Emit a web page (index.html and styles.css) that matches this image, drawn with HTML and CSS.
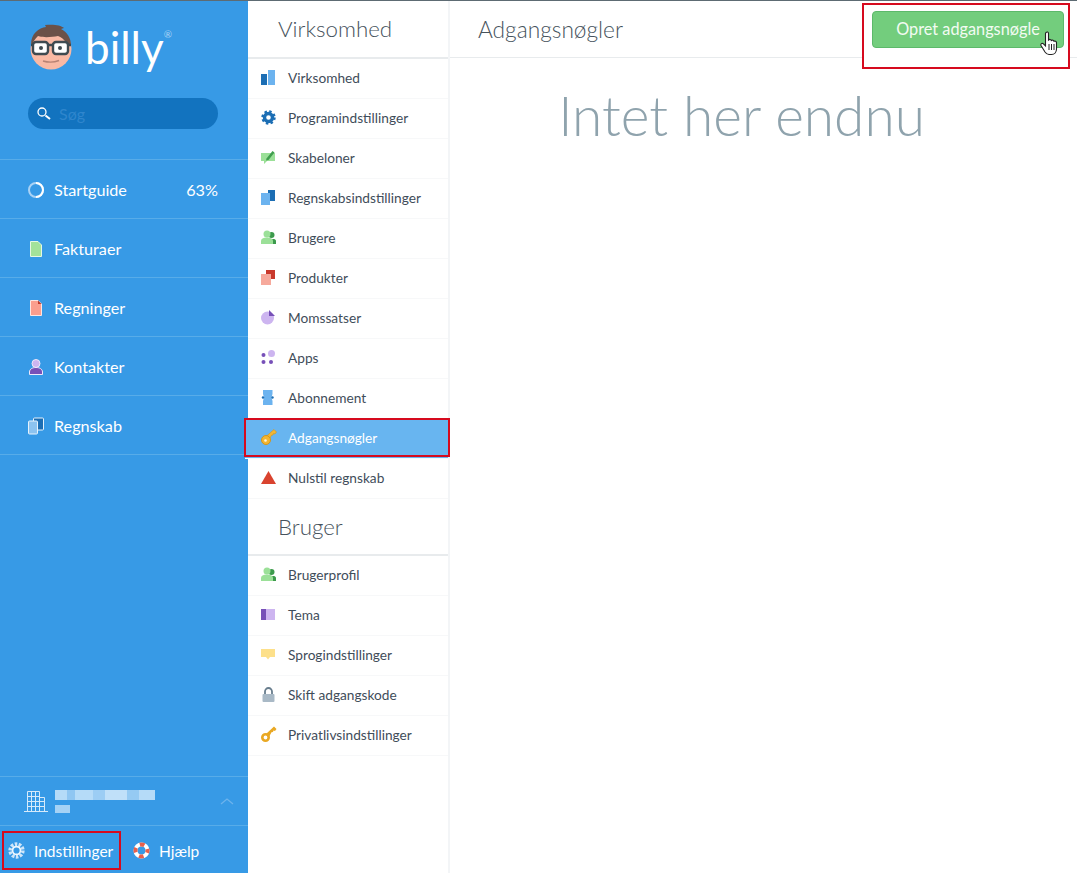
FILE: index.html
```html
<!DOCTYPE html>
<html lang="da">
<head>
<meta charset="utf-8">
<title>Adgangsnøgler</title>
<link rel="stylesheet" href="styles.css">
</head>
<body>
<div class="app">
  <aside class="side">
    <div class="brand">
      <svg class="face" width="44" height="46" viewBox="0 0 44 46">
        <circle cx="22" cy="25" r="20.5" fill="#f9b9a4"/>
        <path d="M2 21C2 9 10 4 17 3l-1-2c8-1 16 0 19 3l-3 1c6 3 10 9 10 16l-4-1c-3-5-6-7-9-8-6 1-14 2-20 0-3 3-5 6-6 9z" fill="#6b5148"/>
        <rect x="4" y="18" width="15" height="12" rx="3" fill="#fff" stroke="#3f4a50" stroke-width="2.4"/>
        <rect x="24" y="18" width="15" height="12" rx="3" fill="#fff" stroke="#3f4a50" stroke-width="2.4"/>
        <path d="M19 21h5M2 21h2M39 21h3" stroke="#3f4a50" stroke-width="2.4"/>
        <circle cx="12" cy="24" r="2" fill="#3f4a50"/><circle cx="31" cy="24" r="2" fill="#3f4a50"/>
        <path d="M14 37c5 1.500 11 1.500 16-.5" fill="none" stroke="#b98273" stroke-width="1.400"/>
      </svg>
      <span class="word">billy</span><span class="reg">®</span>
    </div>
    <div class="search">
      <svg width="16" height="16" viewBox="0 0 16 16"><circle cx="6" cy="6" r="4" fill="none" stroke="#fff" stroke-width="1.300"/><path d="M9.500 9.500l4.500 3.500" stroke="#fff" stroke-width="2"/></svg>
      <span class="search-ph">Søg</span>
    </div>
    <nav class="mainnav">
      <a class="mainitem">
        <svg class="mi" width="18" height="18" viewBox="0 0 18 18"><circle cx="9" cy="9" r="7" fill="none" stroke="#a9d2f5" stroke-width="2"/><path d="M9 2A7 7 0 0 1 9 16" fill="none" stroke="#fff" stroke-width="2"/></svg>
        <span class="grow">Startguide</span><span>63%</span>
      </a>
      <a class="mainitem">
        <svg class="mi" width="18" height="18" viewBox="0 0 18 18"><path d="M3.500 1.500h7.500l3.500 3.500v11.500h-11z" fill="#a3e29a" stroke="#e6f7e3"/></svg>
        <span class="grow">Fakturaer</span>
      </a>
      <a class="mainitem">
        <svg class="mi" width="18" height="18" viewBox="0 0 18 18"><path d="M3.500 1.500h7.500l3.500 3.500v11.500h-11z" fill="#fb9e8d" stroke="#fde6e1"/><path d="M11 1.500l3.500 3.500h-3.500z" fill="#c0392b"/></svg>
        <span class="grow">Regninger</span>
      </a>
      <a class="mainitem">
        <svg class="mi" width="18" height="18" viewBox="0 0 18 18"><circle cx="9" cy="5.500" r="4" fill="#cdb5f0" stroke="#efe8fb"/><path d="M2.500 16.500v-2.500c0-3 3-4.500 6.500-4.500s6.500 1.500 6.500 4.500v2.500z" fill="#7750b8" stroke="#efe8fb"/></svg>
        <span class="grow">Kontakter</span>
      </a>
      <a class="mainitem">
        <svg class="mi" width="18" height="18" viewBox="0 0 18 18"><rect x="6.500" y="1" width="10" height="12" rx="1" fill="#1c6eb4" stroke="#e6f2fc"/><rect x="1.500" y="4" width="9" height="13" rx="1" fill="#8cc3f0" stroke="#e6f2fc"/></svg>
        <span class="grow">Regnskab</span>
      </a>
    </nav>
    <div class="spacer"></div>
    <div class="org">
      <svg width="24" height="24" viewBox="0 0 24 24" fill="none" stroke="#d6eafa"><path d="M3.500 22.500v-20h12v20M15.500 8.500h5v14M0 22.500h24M3.500 7.500h12M3.500 12.500h17M3.500 17.500h17M7.500 2.500v20M11.500 2.500v20"/></svg>
      <div class="org-text"><div class="blur-a"></div><div class="blur-b"></div></div>
      <svg class="chev" width="14" height="8" viewBox="0 0 14 8"><path d="M1 7l6-5 6 5" fill="none" stroke="#6db3ec" stroke-width="1.300"/></svg>
    </div>
    <div class="foot">
      <a class="foot-btn marked">
        <svg width="17" height="17" viewBox="0 0 16 16"><circle cx="8" cy="8" r="6" fill="none" stroke="#cfe6f9" stroke-width="3.400" stroke-dasharray="2.400 1.300"/><circle cx="8" cy="8" r="3.700" fill="none" stroke="#eef7fe" stroke-width="1.600"/></svg>
        <span>Indstillinger</span>
      </a>
      <a class="foot-btn help">
        <svg width="17" height="17" viewBox="0 0 17 17"><circle cx="8.500" cy="8.500" r="6" fill="none" stroke="#fff" stroke-width="4"/><circle cx="8.500" cy="8.500" r="6" fill="none" stroke="#e8604c" stroke-width="4" stroke-dasharray="4.700 4.700" stroke-dashoffset="2.350"/></svg>
        <span>Hjælp</span>
      </a>
    </div>
  </aside>

  <section class="sub">
    <h2 class="sub-head first">Virksomhed</h2>
    <ul class="sub-list">
      <li class="sub-item"><svg class="si" width="15" height="15" viewBox="0 0 15 15"><rect y="4" width="6" height="11" fill="#1c6eb4"/><rect x="7" width="7" height="15" fill="#6cb3ef"/></svg>Virksomhed</li>
      <li class="sub-item"><svg class="si" width="15" height="15" viewBox="0 0 15 15"><circle cx="7.500" cy="7.500" r="4" fill="none" stroke="#1c6eb4" stroke-width="3.400"/><circle cx="7.500" cy="7.500" r="6" fill="none" stroke="#1c6eb4" stroke-width="2.400" stroke-dasharray="2.400 2.310"/></svg>Programindstillinger</li>
      <li class="sub-item"><svg class="si" width="15" height="15" viewBox="0 0 15 15"><path d="M0 3h14v8H6l-3 3v-3H0z" fill="#9be098"/><path d="M5.500 8.500L11.500 1l2 1.500-6 7.500-2.500.5z" fill="#3f9e4d"/></svg>Skabeloner</li>
      <li class="sub-item"><svg class="si" width="15" height="15" viewBox="0 0 15 15"><rect x="7" width="7" height="11" fill="#1c6eb4"/><rect y="3" width="9" height="12" fill="#6cb3ef"/></svg>Regnskabsindstillinger</li>
      <li class="sub-item"><svg class="si" width="15" height="15" viewBox="0 0 15 15"><circle cx="10.500" cy="5" r="3" fill="#3c9a4c"/><path d="M10 9h3c1 0 2 1 2 2v3h-4z" fill="#3c9a4c"/><circle cx="6" cy="4" r="3.500" fill="#9be098"/><path d="M0 14v-3c0-2 2-3.500 6-3.500s6 1.500 6 3.500v3z" fill="#9be098"/></svg>Brugere</li>
      <li class="sub-item"><svg class="si" width="15" height="15" viewBox="0 0 15 15"><rect x="5" width="9" height="9" fill="#c9392c"/><rect y="4" width="10" height="11" fill="#f6a99c"/></svg>Produkter</li>
      <li class="sub-item"><svg class="si" width="15" height="15" viewBox="0 0 15 15"><circle cx="6.500" cy="8" r="6.500" fill="#cdb5f0"/><path d="M8 0l6 6H8z" fill="#7750b8"/></svg>Momssatser</li>
      <li class="sub-item"><svg class="si" width="15" height="15" viewBox="0 0 15 15"><circle cx="2.500" cy="5" r="2" fill="#7750b8"/><circle cx="10.500" cy="3.500" r="3.500" fill="#cdb5f0"/><circle cx="2.500" cy="12" r="2" fill="#7750b8"/><circle cx="10" cy="12" r="2" fill="#7750b8"/></svg>Apps</li>
      <li class="sub-item"><svg class="si" width="15" height="15" viewBox="0 0 15 15"><path d="M2 0h9.500v4l-1 3.500 1 3.500v4H2v-4l1-3.500L2 4z" fill="#6cb3ef"/><circle cx="2" cy="7.500" r="1.200" fill="#1c6eb4"/><circle cx="11.500" cy="7.500" r="1.200" fill="#1c6eb4"/></svg>Abonnement</li>
      <li class="sub-item active"><svg class="si si-wide" width="16" height="16" viewBox="0 0 16 16"><path d="M4.500 8L13 .5 15.500 3 14 5l-1.500-.5L12 6l-1.500.2L8 11z" fill="#f2b632" stroke="#d59518" stroke-width=".6"/><circle cx="5" cy="11" r="4.500" fill="#f2b632" stroke="#d59518"/><circle cx="4.500" cy="11.500" r="1.300" fill="#fff6dc"/></svg>Adgangsnøgler</li>
      <li class="sub-item"><svg class="si" width="15" height="15" viewBox="0 0 15 15"><path d="M7.500 1L15 14H0z" fill="#d9432f"/></svg>Nulstil regnskab</li>
    </ul>
    <h2 class="sub-head second">Bruger</h2>
    <ul class="sub-list">
      <li class="sub-item"><svg class="si" width="15" height="15" viewBox="0 0 15 15"><circle cx="10.500" cy="5" r="3" fill="#3c9a4c"/><path d="M10 9h3c1 0 2 1 2 2v3h-4z" fill="#3c9a4c"/><circle cx="6" cy="4" r="3.500" fill="#9be098"/><path d="M0 14v-3c0-2 2-3.500 6-3.500s6 1.500 6 3.500v3z" fill="#9be098"/></svg>Brugerprofil</li>
      <li class="sub-item"><svg class="si" width="15" height="15" viewBox="0 0 15 15"><rect y="2" width="5" height="11" fill="#7750b8"/><rect x="5" y="2" width="9" height="11" fill="#cdb5f0"/></svg>Tema</li>
      <li class="sub-item"><svg class="si" width="15" height="15" viewBox="0 0 15 15"><path d="M0 2h14v8H9l-2 2.500L5 10H0z" fill="#fde08a"/></svg>Sprogindstillinger</li>
      <li class="sub-item"><svg class="si" width="15" height="15" viewBox="0 0 15 15"><path d="M4 7V4.500a3.500 3.500 0 0 1 7 0V7" fill="none" stroke="#687d8d" stroke-width="1.800"/><rect x="1.500" y="7" width="12" height="8" rx="1" fill="#a9b9c6"/></svg>Skift adgangskode</li>
      <li class="sub-item"><svg class="si si-wide" width="16" height="16" viewBox="0 0 16 16"><path d="M5 8L13 .5 15.500 3 14 5l-1.500-.5L12 6l-1.500.2L8 11z" fill="#e9a823"/><circle cx="4.500" cy="11.500" r="3.200" fill="#fff" stroke="#e9a823" stroke-width="2.600"/></svg>Privatlivsindstillinger</li>
    </ul>
  </section>

  <main class="content">
    <header class="top">
      <h1 class="title">Adgangsnøgler</h1>
      <div class="cta-box">
        <button class="cta">Opret adgangsnøgle</button>
        <svg class="cursor" width="20" height="25" viewBox="0 0 20 25"><path d="M6 1.500c1-1 2.500-.5 2.500 1V9c1-1 2.500-.6 2.800.5 1-.8 2.500-.3 2.700.8 1-.5 2.500 0 2.500 1.500V18c0 3-2 5.500-5 5.500H9c-2 0-3-1-4-2.500L1 14.500c-.6-1.500 1-2.800 2.200-1.800L5.500 15V2.500z" fill="#fff" stroke="#222" stroke-width="1.100"/><path d="M9 13v6M11.500 13v6M14 13v6" stroke="#222"/></svg>
      </div>
    </header>
    <p class="empty">Intet her endnu</p>
  </main>
</div>
</body>
</html>
```

FILE: styles.css
```css
* { box-sizing: border-box; }
html, body { margin: 0; height: 100%; }
body {
  font-family: Lato, "Open Sans", sans-serif;
  background: #fff;
  color: #3f4d5a;
  overflow: hidden;
}
.app {
  display: flex;
  width: 1077px;
  height: 873px;
  border-top: 1px solid #5d6b73;
}
.side {
  width: 248px;
  flex: none;
  display: flex;
  flex-direction: column;
  background: #379ae6;
  color: #fff;
}
.brand {
  height: 71px;
  padding: 23px 0 0 29px;
  display: flex;
  align-items: flex-start;
  position: relative;
}
.face { flex: none; }
.word {
  font-size: 44px;
  line-height: 46px;
  font-weight: 400;
  margin-left: 12px;
  color: #fff;
}
.reg { font-size: 10px; color: #a9d2f5; margin-top: 4px; }
.search {
  margin: 26px 30px 0 28px;
  height: 31px;
  border-radius: 16px;
  background: #1273bf;
  display: flex;
  align-items: center;
  padding-left: 8px;
  gap: 7px;
}
.search-ph { font-size: 16px; color: #2f86cd; }
.mainnav {
  margin-top: 30px;
  border-top: 1px solid #57ace9;
}
.mainitem {
  height: 59px;
  display: flex;
  align-items: center;
  padding: 1px 30px 0 27px;
  font-size: 16.200px;
  border-bottom: 1px solid #57ace9;
  gap: 9px;
}
.mi { flex: none; }
.grow { flex: 1; }
.spacer { flex: 1; }
.org {
  height: 50px;
  flex: none;
  border-top: 1px solid #57ace9;
  border-bottom: 1px solid #57ace9;
  display: flex;
  align-items: center;
  padding: 0 14px 0 24px;
  gap: 7px;
}
.org-text { flex: 1; }
.blur-a {
  width: 100px;
  height: 10px;
  background: linear-gradient(90deg, #b5dbf8 0 12%, #8fc6f2 12% 20%, #b5dbf8 20% 38%, #9ccdf4 38% 50%, #c0e0f9 50% 72%, #95caf3 72% 84%, #b5dbf8 84%);
}
.blur-b { width: 15px; height: 8px; margin-top: 5px; background: #a5d2f5; }
.foot {
  height: 47px;
  flex: none;
  display: flex;
  align-items: center;
  padding: 2px 0 0 2px;
  font-size: 15.500px;
  gap: 12px;
}
.foot-btn { display: flex; align-items: center; gap: 9px; }
.marked {
  height: 39px;
  width: 119px;
  padding-left: 4px;
  border: 2px solid #d60a1e;
}
.help { gap: 9px; }
.sub {
  width: 202px;
  flex: none;
  border-right: 2px solid #f3f5f7;
}
.sub-head {
  margin: 0;
  font-weight: 300;
  font-size: 22.300px;
  border-bottom: 2px solid #e8ebed;
  padding-left: 30px;
  color: #46525c;
}
.first { height: 58px; line-height: 56px; }
.second { height: 57px; line-height: 56px; }
.sub-list { list-style: none; margin: 0; padding: 0; }
.sub-item {
  height: 40px;
  display: flex;
  align-items: center;
  padding: 0 0 3px 13px;
  gap: 12px;
  font-size: 13.700px;
  border-bottom: 1px solid #f7f8f9;
}
.si { flex: none; }
.si-wide { margin-right: -1px; }
.active {
  background: #68b5f0;
  color: #fff;
  margin-left: -3px;
  padding-left: 16px;
  position: relative;
}
.active::after {
  content: "";
  position: absolute;
  inset: -1px -2px 1px -1px;
  border: 2px solid #d60a1e;
}
.content { flex: 1; min-width: 0; }
.top {
  height: 57px;
  border-bottom: 1px solid #e8ebed;
  display: flex;
  align-items: flex-start;
  justify-content: space-between;
  padding-left: 28px;
}
.title {
  margin: 0;
  font-weight: 300;
  font-size: 22.700px;
  line-height: 57px;
  color: #46525c;
}
.cta-box {
  position: relative;
  width: 208px;
  height: 66px;
  margin-right: 7px;
  margin-top: 2px;
  padding: 6px 0 0 8px;
  border: 2px solid #d60a1e;
  background: #fff;
}
.cta {
  width: 192px;
  height: 37px;
  padding: 0 0 2px;
  border: 1px solid #5cb96a;
  border-radius: 4px;
  background: #73cd7d;
  color: #f2fbf2;
  font: 16.300px Lato, sans-serif;
}
.cursor { position: absolute; right: 8px; top: 26px; }
.empty {
  margin: 22px 44px 0 0;
  text-align: center;
  font-size: 55px;
  line-height: 70px;
  font-weight: 300;
  color: #8fa3ad;
}
```
